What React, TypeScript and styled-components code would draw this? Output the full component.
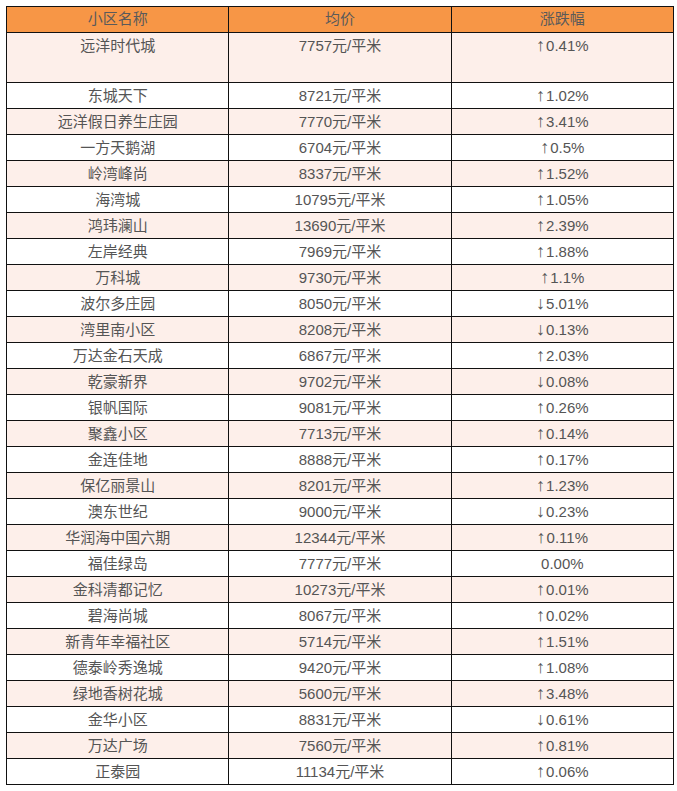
import * as React from "react";
import styled, { createGlobalStyle } from "styled-components";

const GlobalStyle = createGlobalStyle`
  body {
    margin: 0;
    background: #ffffff;
    font-family: "Liberation Sans", "Noto Sans CJK SC", sans-serif;
  }
`;

const Wrapper = styled.div`
  padding: 6px 0 0 6px;
`;

const Table = styled.table`
  width: 668px;
  border-collapse: collapse;
  table-layout: fixed;
  font-size: 15px;
  color: #555555;
`;

const HeadCell = styled.th`
  background: #f79646;
  color: #5a5a5a;
  font-weight: normal;
  height: 25px;
  padding: 0 4px;
  line-height: 24px;
  vertical-align: top;
  border: 1px solid #111111;
  text-align: center;
`;

const Row = styled.tr<{ $shaded: boolean }>`
  background: ${(p) => (p.$shaded ? "#fdefea" : "#ffffff")};
`;

const Cell = styled.td<{ $tall?: boolean }>`
  height: ${(p) => (p.$tall ? "50px" : "25px")};
  box-sizing: border-box;
  padding: 2px 4px;
  line-height: 21px;
  vertical-align: top;
  text-align: center;
  border: 1px solid #111111;
`;

const Arrow = styled.span`
  font-size: 18px;
  line-height: 0;
  margin-right: 1px;
`;

type Entry = [string, string, string];

const rows: Entry[] = [
  ["远洋时代城", "7757", "↑0.41%"],
  ["东城天下", "8721", "↑1.02%"],
  ["远洋假日养生庄园", "7770", "↑3.41%"],
  ["一方天鹅湖", "6704", "↑0.5%"],
  ["岭湾峰尚", "8337", "↑1.52%"],
  ["海湾城", "10795", "↑1.05%"],
  ["鸿玮澜山", "13690", "↑2.39%"],
  ["左岸经典", "7969", "↑1.88%"],
  ["万科城", "9730", "↑1.1%"],
  ["波尔多庄园", "8050", "↓5.01%"],
  ["湾里南小区", "8208", "↓0.13%"],
  ["万达金石天成", "6867", "↑2.03%"],
  ["乾豪新界", "9702", "↓0.08%"],
  ["银帆国际", "9081", "↑0.26%"],
  ["聚鑫小区", "7713", "↑0.14%"],
  ["金连佳地", "8888", "↑0.17%"],
  ["保亿丽景山", "8201", "↑1.23%"],
  ["澳东世纪", "9000", "↓0.23%"],
  ["华润海中国六期", "12344", "↑0.11%"],
  ["福佳绿岛", "7777", "0.00%"],
  ["金科清都记忆", "10273", "↑0.01%"],
  ["碧海尚城", "8067", "↑0.02%"],
  ["新青年幸福社区", "5714", "↑1.51%"],
  ["德泰岭秀逸城", "9420", "↑1.08%"],
  ["绿地香树花城", "5600", "↑3.48%"],
  ["金华小区", "8831", "↓0.61%"],
  ["万达广场", "7560", "↑0.81%"],
  ["正泰园", "11134", "↑0.06%"],
];

const Change = ({ value }: { value: string }) => {
  const first = value.charAt(0);
  if (first === "↑" || first === "↓") {
    return (
      <>
        <Arrow>{first}</Arrow>
        {value.slice(1)}
      </>
    );
  }
  return <>{value}</>;
};

const App = () => {
  return (
    <Wrapper>
      <GlobalStyle />
      <Table>
        <thead>
          <tr>
            <HeadCell>小区名称</HeadCell>
            <HeadCell>均价</HeadCell>
            <HeadCell>涨跌幅</HeadCell>
          </tr>
        </thead>
        <tbody>
          {rows.map(([name, price, change], i) => (
            <Row key={name} $shaded={i % 2 === 0}>
              <Cell $tall={i === 0}>{name}</Cell>
              <Cell $tall={i === 0}>{price}元/平米</Cell>
              <Cell $tall={i === 0}>
                <Change value={change} />
              </Cell>
            </Row>
          ))}
        </tbody>
      </Table>
    </Wrapper>
  );
};

export default App;
